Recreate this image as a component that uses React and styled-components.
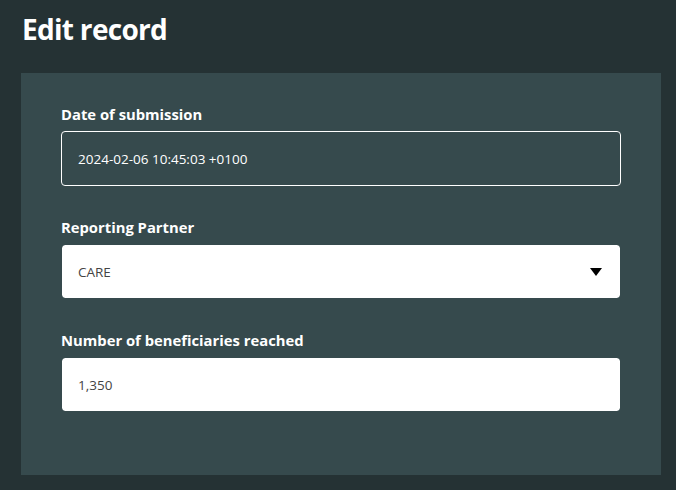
import React from "react";
import styled, { createGlobalStyle } from "styled-components";

const Global = createGlobalStyle`
  html, body { margin: 0; padding: 0; background: #253234; }
  body { font-family: "Open Sans", "Noto Sans", sans-serif; }
`;

const Page = styled.div`
  min-height: 490px;
  background: #253234;
  padding: 9px 15px 15px 21px;
  box-sizing: border-box;
`;

const Title = styled.h1`
  margin: 0 0 0 1px;
  font-size: 28px;
  line-height: 40px;
  font-weight: 700;
  color: #ffffff;
  letter-spacing: -0.7px;
`;

const Card = styled.div`
  margin-top: 24px;
  background: #364a4d;
  padding: 31px 40px 33px 40px;
  display: flex;
  flex-direction: column;
  gap: 31px;
  height: 402px;
  box-sizing: border-box;
`;

const Field = styled.div`
  display: flex;
  flex-direction: column;
  gap: 7px;
`;

const Label = styled.label`
  font-size: 14.8px;
  line-height: 20px;
  font-weight: 700;
  color: #ffffff;
`;

const Box = styled.div`
  height: 55px;
  box-sizing: border-box;
  border: 1px solid ${(p) => (p.$outlined ? "#ffffff" : "#364a4d")};
  border-radius: 4px;
  background: ${(p) => (p.$outlined ? "transparent" : "#ffffff")};
  background-clip: padding-box;
  display: flex;
  align-items: center;
  justify-content: space-between;
  padding: 0 18px 0 16px;
  font-size: 13.5px;
  color: ${(p) => (p.$outlined ? "#ffffff" : "#444444")};
`;

const Arrow = styled.svg`
  width: 12px;
  height: 8px;
  display: block;
`;

export default function App() {
  return (
    <Page>
      <Global />
      <Title>Edit record</Title>
      <Card>
        <Field>
          <Label>Date of submission</Label>
          <Box $outlined>2024-02-06 10:45:03 +0100</Box>
        </Field>
        <Field>
          <Label>Reporting Partner</Label>
          <Box>
            <span>CARE</span>
            <Arrow viewBox="0 0 12 8">
              <path d="M0 0 H12 L6 8 Z" fill="#000" />
            </Arrow>
          </Box>
        </Field>
        <Field>
          <Label>Number of beneficiaries reached</Label>
          <Box>1,350</Box>
        </Field>
      </Card>
    </Page>
  );
}
